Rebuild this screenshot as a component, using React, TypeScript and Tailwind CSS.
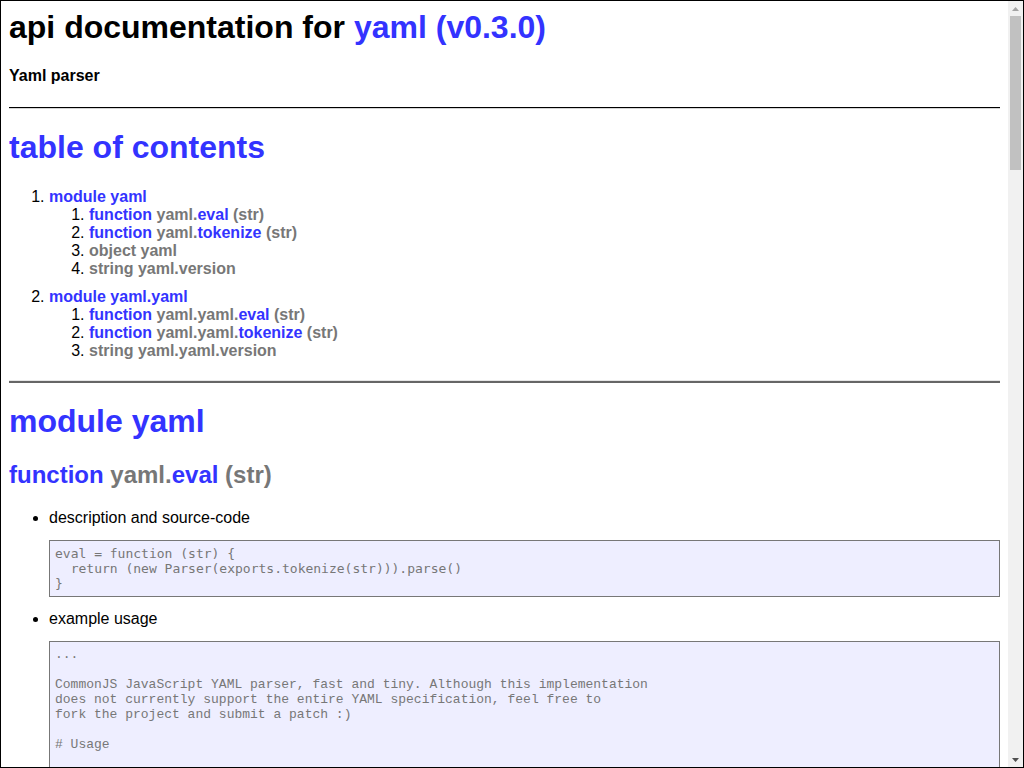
import * as React from 'react';

const Sig = ({ pre, name, args }: { pre: string; name?: string; args?: string }) => (
    <>
        <span className="text-[#777]">{pre}</span>
        {name && <span className="text-[#33f]">{name}</span>}
        {args && <span className="text-[#777]">{args}</span>}
    </>
);

const tocItems = [
    {
        title: 'module yaml',
        items: [
            { kind: 'function', pre: ' yaml.', name: 'eval', args: ' (str)' },
            { kind: 'function', pre: ' yaml.', name: 'tokenize', args: ' (str)' },
            { kind: '', pre: 'object yaml' },
            { kind: '', pre: 'string yaml.version' },
        ],
    },
    {
        title: 'module yaml.yaml',
        items: [
            { kind: 'function', pre: ' yaml.yaml.', name: 'eval', args: ' (str)' },
            { kind: 'function', pre: ' yaml.yaml.', name: 'tokenize', args: ' (str)' },
            { kind: '', pre: 'string yaml.yaml.version' },
        ],
    },
];

const evalSrc = `eval = function (str) {
  return (new Parser(exports.tokenize(str))).parse()
}`;

const exampleUsage = `...

CommonJS JavaScript YAML parser, fast and tiny. Although this implementation
does not currently support the entire YAML specification, feel free to
fork the project and submit a patch :)

# Usage

    require('yaml').eval(string)

# Example

    ---
      invoice: 34843
      date   : 2001-01-23
...`;

const CodeBox = ({ code, mono }: { code: string; mono: string }) => (
    <pre className={`mt-[13px] border border-[#777] bg-[#eef] p-[5px] text-[13px] leading-[15px] text-[#777] whitespace-pre overflow-hidden ${mono}`}>
        {code}
    </pre>
);

// the page's own scrollbar, drawn
const ScrollBar = () => (
    <div className="w-[15px] shrink-0 flex flex-col bg-[#f1f1f1]">
        <div className="h-[15px] flex items-center justify-center">
            <svg width="7" height="4" viewBox="0 0 7 4"><path d="M3.5 0 L7 4 L0 4 Z" fill="#a3a3a3" /></svg>
        </div>
        <div className="mx-[2px] h-[154px] bg-[#c1c1c1]"></div>
        <div className="flex-1"></div>
        <div className="h-[15px] flex items-center justify-center">
            <svg width="7" height="4" viewBox="0 0 7 4"><path d="M0 0 L7 0 L3.5 4 Z" fill="#505050" /></svg>
        </div>
    </div>
);

const App: React.FunctionComponent = () => {
    return <>
        <div className="h-screen flex overflow-hidden border border-black bg-white text-black font-['Liberation_Sans',Arial,sans-serif]">
            <div className="flex-1 min-w-0 overflow-hidden p-2">
                <h1 className="text-[32px] leading-[37px] font-bold">
                    api documentation for <span className="text-[#33f]">yaml (v0.3.0)</span>
                </h1>
                <p className="mt-[21px] leading-[18px] font-bold">Yaml parser</p>
                <div className="mt-[22px] border-t border-t-black border-b border-b-[#d4d4d4]"></div>

                <h1 className="mt-[20px] text-[32px] leading-[37px] font-bold text-[#33f]">table of contents</h1>
                <ol className="mt-[22px] list-decimal pl-10 leading-[18px]">
                    {tocItems.map((mod, i) => (
                        <li key={i} className={i > 0 ? 'mt-[10px]' : ''}>
                            <span className="font-bold text-[#33f]">{mod.title}</span>
                            <ol className="list-decimal pl-10">
                                {mod.items.map((it, j) => (
                                    <li key={j}>
                                        <span className="font-bold">
                                            {it.kind ? <><span className="text-[#33f]">{it.kind}</span><Sig pre={it.pre} name={it.name} args={it.args} /></> : <span className="text-[#777]">{it.pre}</span>}
                                        </span>
                                    </li>
                                ))}
                            </ol>
                        </li>
                    ))}
                </ol>
                <div className="mt-[20px] border-t border-t-[#e6e6e6] border-b-2 border-b-[#666]"></div>

                <h1 className="mt-[20px] text-[32px] leading-[37px] font-bold text-[#33f]">module yaml</h1>
                <h2 className="mt-[21px] text-[24px] leading-[28px] font-bold">
                    <span className="text-[#33f]">function</span> <Sig pre="yaml." name="eval" args=" (str)" />
                </h2>
                <ul className="mt-[20px] list-disc pl-10 leading-[18px]">
                    <li>description and source-code</li>
                    <li className="list-none"><CodeBox code={evalSrc} mono="font-['DejaVu_Sans_Mono',monospace]" /></li>
                    <li className="mt-[13px]">example usage</li>
                    <li className="list-none"><CodeBox code={exampleUsage} mono="font-['Liberation_Mono',monospace]" /></li>
                </ul>
            </div>
            <ScrollBar />
        </div>
    </>;
};

export default App;
